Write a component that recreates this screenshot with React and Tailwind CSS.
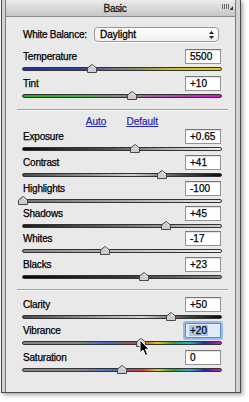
import React from 'react';

const font = "[font-family:'Liberation_Sans',Arial,sans-serif]";

const whiteBalance = [
  { label: 'Temperature', value: '5500', pos: 70, mt: 'mt-[7px]', track: 'bg-[linear-gradient(to_right,#1f33a8,#2f44a0_30%,#6f7388_45%,#8f8c60_58%,#c9be2a_75%,#dcd018)]' },
  { label: 'Tint', value: '+10', pos: 110, mt: 'mt-[5px]', track: 'bg-[linear-gradient(to_right,#18b018,#40aa40_28%,#858585_50%,#ae4cae_72%,#d016d0)]' },
];

const tone = [
  { label: 'Exposure', value: '+0.65', pos: 113, mt: 'mt-[1px]', track: 'bg-[linear-gradient(to_right,#0a0a0a,#555_45%,#b5b5b5_75%,#f0f0f0)]' },
  { label: 'Contrast', value: '+41', pos: 140, mt: 'mt-[4px]', track: 'bg-[linear-gradient(to_right,#4a4a4a,#999_35%,#d2d2d2_55%,#4a4a4a_80%,#0a0a0a)]' },
  { label: 'Highlights', value: '-100', pos: 1, mt: 'mt-[4px]', track: 'bg-[linear-gradient(to_right,#707070,#a8a8a8_50%,#e4e4e4)]' },
  { label: 'Shadows', value: '+45', pos: 144, mt: 'mt-[3px]', track: 'bg-[linear-gradient(to_right,#1a1a1a,#707070_50%,#d0d0d0)]' },
  { label: 'Whites', value: '-17', pos: 83, mt: 'mt-[3px]', track: 'bg-[linear-gradient(to_right,#868686,#bcbcbc_50%,#efefef)]' },
  { label: 'Blacks', value: '+23', pos: 122, mt: 'mt-[4px]', track: 'bg-[linear-gradient(to_right,#080808,#353535_50%,#888)]' },
];

const presence = [
  { label: 'Clarity', value: '+50', pos: 149, mt: 'mt-[6px]', track: 'bg-[linear-gradient(to_right,#4a4a4a,#999_35%,#d2d2d2_60%,#4a4a4a_82%,#0a0a0a)]' },
  { label: 'Vibrance', value: '+20', pos: 119, mt: 'mt-[4px]', focus: true, track: 'bg-[linear-gradient(to_right,#888,#888_28%,#3c6fd0_42%,#d23c2c_60%,#d8c81c_68%,#2aa83c_76%,#2cb0c8_84%,#2228b0_92%,#d21cc8)]' },
  { label: 'Saturation', value: '0', pos: 100, mt: 'mt-[5px]', track: 'bg-[linear-gradient(to_right,#888,#888_30%,#3c6fd0_45%,#d23c2c_60%,#d8c81c_68%,#2aa83c_76%,#2cb0c8_84%,#2228b0_92%,#d21cc8)]' },
];

function Thumb({ pos }) {
  return (
    <svg
      width="10"
      height="9"
      viewBox="0 0 10 9"
      className="absolute top-[-3px]"
      style={{ left: pos - 5 }}
    >
      <path d="M5 0.5 L9.5 4 V8.5 H0.5 V4 Z" fill="#cdcdcd" stroke="#474747" strokeWidth="1" />
      <path d="M5 1.7 L8.4 4.3" stroke="#f2f2f2" strokeWidth="1" />
    </svg>
  );
}

function SliderGroup({ s }) {
  return (
    <div className={`${s.mt} flex flex-col`}>
      <div className="flex h-[15px] items-center justify-between">
        <span className="ml-px text-[10px] tracking-[-0.2px] text-black [-webkit-text-stroke:0.25px_#000]">
          {s.label}
        </span>
        {s.focus ? (
          <div className="mr-[1px] flex h-[15px] w-[36px] items-center rounded-[1px] border border-[#5a8bd0] bg-[#e2ecf9] pl-[3px] shadow-[0_0_0_2px_#99bce9]">
            <span className="bg-[#a6c7f0] px-px text-[10px] leading-[11px] text-black [-webkit-text-stroke:0.25px_#000]">
              {s.value}
            </span>
          </div>
        ) : (
          <div className="mr-[1px] flex h-[15px] w-[36px] items-center border border-[#949494] border-t-[#777] bg-white pl-[4px] text-[10px] text-black shadow-[inset_0_1px_1px_rgba(0,0,0,0.12)] [-webkit-text-stroke:0.25px_#000]">
            {s.value}
          </div>
        )}
      </div>
      <div className="relative mt-[3px] h-[4px] w-full">
        <div className={`absolute inset-0 rounded-[2px] border border-[#333] ${s.track}`} />
        <Thumb pos={s.pos} />
      </div>
    </div>
  );
}

function Separator({ mt }) {
  return <div className={`${mt} -ml-[5px] -mr-[6px] h-[2px] border-t border-[#a2a2a2] border-b border-b-[#f8f8f8]`} />;
}

export default function App() {
  return (
    <div className={`relative h-[402px] w-[249px] overflow-hidden bg-white ${font}`}>
      {/* outer frame */}
      <div className="ml-[1px] h-[393px] w-[240px] border-x border-b border-[#4a4a4a] bg-[#d3d3d3] pl-[3px] pr-[4px] shadow-[2px_2px_4px_rgba(0,0,0,0.35)]">
        <div className="flex h-full flex-col border-x border-[#7c7c7c] bg-[#e9e9e9]">
          {/* header */}
          <div className="relative flex h-[17px] items-center justify-center border-b border-[#8a8a8a] bg-[linear-gradient(to_bottom,#ececec,#c6c6c6)] pr-[11px]">
            <span className="text-[10px] tracking-[-0.3px] text-[#1a1a1a] [-webkit-text-stroke:0.3px_#1a1a1a]">Basic</span>
            <svg width="12" height="7" viewBox="0 0 12 7" className="absolute right-[1px] top-[4px]">
              <rect x="0" y="0" width="1" height="5" fill="#666" />
              <rect x="2" y="0" width="1" height="5" fill="#666" />
              <rect x="4" y="0" width="1" height="5" fill="#666" />
              <rect x="6" y="0" width="1" height="5" fill="#666" />
              <path d="M11 2 L11 6 L7.5 6 Z" fill="#333" />
            </svg>
          </div>

          <div className="flex flex-col pl-[16px] pr-[13px]">
            {/* white balance */}
            <div className="mt-[10px] flex h-[15px] items-center justify-between">
              <span className="ml-px text-[10px] tracking-[-0.25px] text-black [-webkit-text-stroke:0.25px_#000]">
                White Balance:
              </span>
              <div className="mr-[3px] flex h-[15px] w-[125px] items-center justify-between rounded-[4px] border border-[#9a9a9a] bg-[linear-gradient(to_bottom,#ffffff,#f0f0f0)] pl-[5px] pr-[4px] shadow-[0_1px_0_rgba(255,255,255,0.8)]">
                <span className="text-[10px] text-black [-webkit-text-stroke:0.3px_#000]">Daylight</span>
                <svg width="5" height="8" viewBox="0 0 5 8">
                  <path d="M2.5 0 L5 3 H0 Z" fill="#222" />
                  <path d="M2.5 8 L5 5 H0 Z" fill="#222" />
                </svg>
              </div>
            </div>

            {whiteBalance.map((s) => (
              <SliderGroup key={s.label} s={s} />
            ))}

            <Separator mt="mt-[11px]" />

            <div className="mt-[5px] flex h-[12px] items-center justify-center gap-[20px]">
              <span className="text-[10px] leading-none text-[#2323b4] underline underline-offset-1 [-webkit-text-stroke:0.2px_#2323b4]">Auto</span>
              <span className="text-[10px] leading-none text-[#2323b4] underline underline-offset-1 [-webkit-text-stroke:0.2px_#2323b4]">Default</span>
            </div>

            {tone.map((s) => (
              <SliderGroup key={s.label} s={s} />
            ))}

            <Separator mt="mt-[10px]" />

            {presence.map((s) => (
              <SliderGroup key={s.label} s={s} />
            ))}
          </div>
        </div>
      </div>

      {/* mouse pointer */}
      <svg width="11" height="18" viewBox="0 0 11 18" className="absolute left-[139px] top-[339px]">
        <path d="M1 1 L1 14 L4 11 L6.5 16.5 L8.7 15.5 L6.3 10.2 L10 10.2 Z" fill="#000" stroke="#fff" strokeWidth="1" strokeLinejoin="round" />
      </svg>
    </div>
  );
}
